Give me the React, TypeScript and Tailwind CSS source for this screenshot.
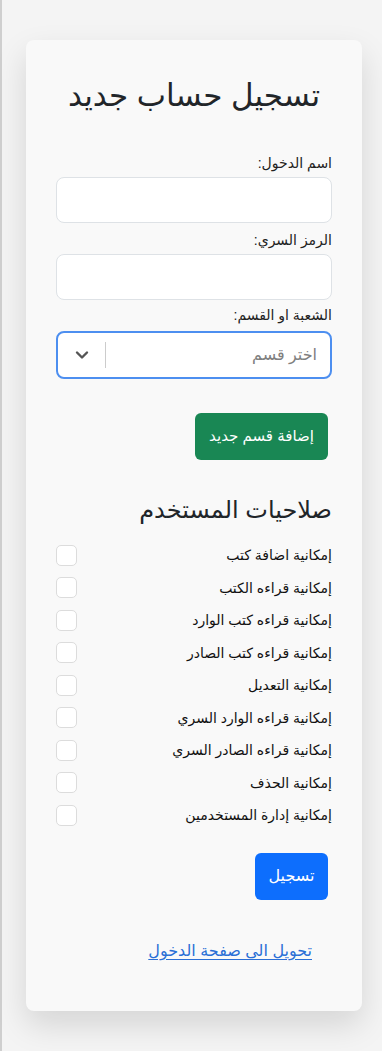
const perms = [
  "إمكانية اضافة كتب",
  "إمكانية قراءه الكتب",
  "إمكانية قراءه كتب الوارد",
  "إمكانية قراءه كتب الصادر",
  "إمكانية التعديل",
  "إمكانية قراءه الوارد السري",
  "إمكانية قراءه الصادر السري",
  "إمكانية الحذف",
  "إمكانية إدارة المستخدمين",
];

function Field({ label }: { label: string }) {
  return (
    <div className="flex flex-col">
      <label className="mb-[4px] h-[20px] text-[14px] leading-[20px] text-[#222]">{label}</label>
      <input
        type="text"
        className="h-[46px] w-full rounded-[8px] border border-[#dee2e6] bg-white px-3 text-[16px] outline-none"
      />
    </div>
  );
}

export default function App() {
  return (
    <div
      dir="rtl"
      className="min-h-[1051px] border-l-2 border-[#cfcfcf] bg-[#f4f4f4] pt-[40px] pb-[43px] text-[#212529]"
      style={{ fontFamily: '"Liberation Sans", Arial, "DejaVu Sans", sans-serif' }}
    >
      <div className="mr-[20px] ml-[24px] rounded-[8px] bg-[#f9f9f9] px-[30px] pt-[36px] pb-[48px] shadow-[0_14px_32px_rgba(0,0,0,0.13)]">
        <h1 className="mb-[37px] h-[40px] text-center text-[31px] leading-[40px] font-normal whitespace-nowrap">
          تسجيل حساب جديد
        </h1>

        <div className="flex flex-col gap-[7px]">
          <Field label="اسم الدخول:" />
          <Field label="الرمز السري:" />
          <div className="-mt-[2px] flex flex-col">
            <label className="mb-[6px] h-[20px] text-[14px] leading-[20px] text-[#222]">الشعبة او القسم:</label>
            <div className="flex h-[48px] items-center rounded-[8px] border-2 border-[#4d8ff0] bg-white">
              <span className="flex-1 pr-[13px] text-[16px] text-[#808080]">اختر قسم</span>
              <span className="h-[26px] w-px bg-[#cccccc]" />
              <span className="flex w-[47px] items-center justify-center">
                <svg width="14" height="10" viewBox="0 0 14 10" fill="none">
                  <path d="M2 2.5 7 7.5 12 2.5" stroke="#555" strokeWidth="2.4" strokeLinecap="round" strokeLinejoin="round" />
                </svg>
              </span>
            </div>
          </div>
        </div>

        <div className="mt-[34px] flex">
          <button className="mr-[4px] h-[47px] w-[133px] rounded-[6px] bg-[#198754] text-[15px] text-white">
            إضافة قسم جديد
          </button>
        </div>

        <h2 className="mt-[34px] mb-[13px] h-[32px] text-[24px] leading-[32px] font-normal">صلاحيات المستخدم</h2>

        <div className="flex flex-col">
          {perms.map((p) => (
            <label key={p} className="flex h-[32.5px] items-center justify-between">
              <span className="text-[14px] leading-[20px] text-[#111]">{p}</span>
              <span className="h-[21px] w-[21px] rounded-[5px] border border-[#dcdcdc] bg-white" />
            </label>
          ))}
        </div>

        <div className="mt-[21px] flex">
          <button className="mr-[4px] h-[47px] w-[73px] rounded-[6px] bg-[#0d6efd] text-[16px] text-white">تسجيل</button>
        </div>

        <div className="mt-[39px] mr-[20px] h-[24px] leading-[24px]">
          <a href="#" className="text-[16px] text-[#2a6fd6] underline underline-offset-[3px]">
            تحويل الى صفحة الدخول
          </a>
        </div>
      </div>
    </div>
  );
}
